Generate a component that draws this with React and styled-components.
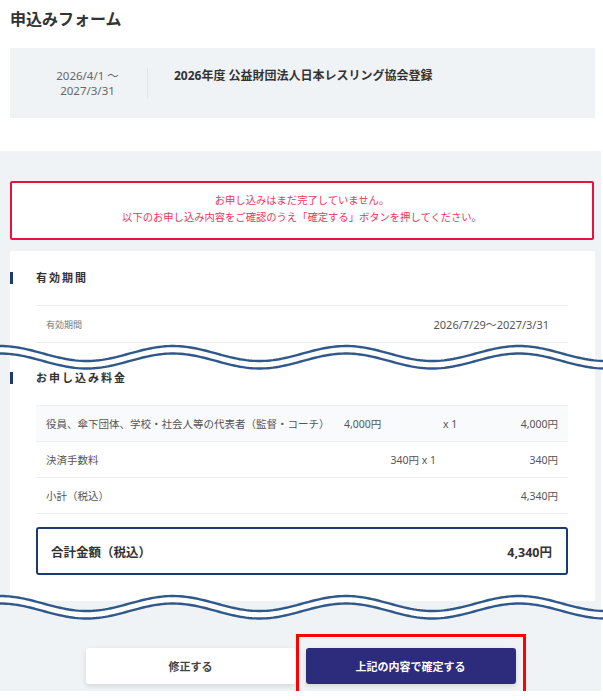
import React from "react";
import styled, { createGlobalStyle } from "styled-components";

const GlobalStyle = createGlobalStyle`
  body {
    margin: 0;
    background: #fff;
    font-family: "Noto Sans", "Noto Sans CJK JP", sans-serif;
    color: #555;
  }
`;

const wavePoints = (c, width = 603, period = 173, amp = 7.5) => {
  const pts = [];
  for (let x = 0; x <= width; x += 3) {
    pts.push([x, c - amp * Math.cos((2 * Math.PI * x) / period)]);
  }
  return pts;
};

const Wave = ({ offset }) => {
  const upper = wavePoints(9.5);
  const lower = wavePoints(17);
  const line = (pts) => "M" + pts.map((p) => p[0] + "," + p[1].toFixed(2)).join(" L");
  const band =
    line(upper) +
    " L" +
    lower
      .slice()
      .reverse()
      .map((p) => p[0] + "," + p[1].toFixed(2))
      .join(" L") +
    " Z";
  return (
    <Cut>
      <WaveSvg style={{ top: offset }} width="603" height="28" viewBox="0 0 603 28">
        <path d={band} fill="#fff" />
        <path d={line(upper)} fill="none" stroke="#30598b" strokeWidth="2.4" />
        <path d={line(lower)} fill="none" stroke="#30598b" strokeWidth="2.4" />
      </WaveSvg>
    </Cut>
  );
};

const App = () => {
  return (
    <Page>
      <GlobalStyle />
      <Header>
        <PageTitle>申込みフォーム</PageTitle>
        <InfoBox>
          <Dates>
            2026/4/1 ～
            <br />
            2027/3/31
          </Dates>
          <EventName>2026年度 公益財団法人日本レスリング協会登録</EventName>
        </InfoBox>
      </Header>

      <Section>
        <Notice>
          お申し込みはまだ完了していません。
          <br />
          以下のお申し込み内容をご確認のうえ「確定する」ボタンを押してください。
        </Notice>

        <Card first>
          <Heading>有効期間</Heading>
          <Table>
            <PeriodRow>
              <SmallLabel>有効期間</SmallLabel>
              <PeriodValue>2026/7/29～2027/3/31</PeriodValue>
            </PeriodRow>
          </Table>
        </Card>
        <Wave offset={-9} />
        <Card>
          <Heading>お申し込み料金</Heading>
          <Table>
            <FeeRow shaded>
              <Cell>役員、傘下団体、学校・社会人等の代表者（監督・コーチ）</Cell>
              <Cell>4,000円</Cell>
              <Cell>x 1</Cell>
              <Cell right>4,000円</Cell>
            </FeeRow>
            <SimpleRow>
              <Cell>決済手数料</Cell>
              <Cell right>340円 x 1</Cell>
              <Cell right>340円</Cell>
            </SimpleRow>
            <SimpleRow>
              <Cell>小計（税込）</Cell>
              <Cell />
              <Cell right>4,340円</Cell>
            </SimpleRow>
          </Table>
          <TotalBox>
            <span>合計金額（税込）</span>
            <span>4,340円</span>
          </TotalBox>
        </Card>
        <Wave offset={-7} />

        <Buttons>
          <Button>修正する</Button>
          <Highlight>
            <Button primary>上記の内容で確定する</Button>
          </Highlight>
        </Buttons>
      </Section>
    </Page>
  );
};

const Page = styled.div`
  width: 603px;
  padding-top: 9px;
`;

const Header = styled.div`
  padding: 0 8px 0 10px;
`;

const PageTitle = styled.h1`
  margin: 0;
  font-size: 16px;
  line-height: 20px;
  font-weight: 700;
  color: #333;
`;

const InfoBox = styled.div`
  margin-top: 19px;
  width: 585px;
  box-sizing: border-box;
  height: 70px;
  background: #eff3f6;
  display: flex;
  align-items: flex-start;
  padding: 20px 18px;
`;

const Dates = styled.div`
  width: 119px;
  text-align: center;
  font-size: 11.5px;
  line-height: 15px;
  color: #666;
  border-right: 1px solid #dfe4e8;
`;

const EventName = styled.div`
  padding-left: 26px;
  font-size: 12px;
  line-height: 16px;
  font-weight: 700;
  color: #333;
`;

const Section = styled.div`
  margin-top: 33px;
  width: 601px;
  box-sizing: border-box;
  background: #eff3f6;
  padding: 30px 6px 7px 10px;
`;

const Notice = styled.div`
  width: 584px;
  box-sizing: border-box;
  border: 2px solid #e8113f;
  border-radius: 2px;
  background: #fff;
  text-align: center;
  color: #ec3560;
  font-size: 10.3px;
  line-height: 17px;
  padding: 9px 0 12px;
`;

const Card = styled.div`
  margin-top: ${(p) => (p.first ? "11px" : "0")};
  width: 585px;
  box-sizing: border-box;
  background: #fff;
  padding: ${(p) => (p.first ? "20px 27px 10px 26px" : "18px 27px 26px 26px")};
`;

const Heading = styled.h2`
  position: relative;
  margin: 0;
  font-size: 11px;
  line-height: 14px;
  font-weight: 700;
  letter-spacing: 2px;
  color: #333;
  &::before {
    content: "";
    position: absolute;
    left: -26px;
    top: 1px;
    width: 3px;
    height: 12px;
    background: #1f3a6e;
  }
`;

const Table = styled.div`
  margin-top: 20px;
  border-top: 1px solid #edf0f3;
`;

const PeriodRow = styled.div`
  height: 36px;
  border-bottom: 1px solid #edf0f3;
  display: flex;
  align-items: center;
  justify-content: space-between;
  padding: 0 19px 0 10px;
`;

const SmallLabel = styled.span`
  font-size: 9px;
  color: #777;
`;

const PeriodValue = styled.span`
  font-size: 11px;
  color: #555;
`;

const FeeRow = styled.div`
  height: 35px;
  border-bottom: 1px solid #edf0f3;
  background: ${(p) => (p.shaded ? "#f8fafc" : "#fff")};
  display: grid;
  grid-template-columns: 1fr 99px 60px 55px;
  align-items: center;
  padding: 0 10px;
`;

const SimpleRow = styled.div`
  height: 35px;
  border-bottom: 1px solid #edf0f3;
  display: grid;
  grid-template-columns: 1fr auto 122px;
  align-items: center;
  padding: 0 10px;
`;

const Cell = styled.span`
  font-size: 10.5px;
  color: #555;
  white-space: nowrap;
  text-align: ${(p) => (p.right ? "right" : "left")};
`;

const TotalBox = styled.div`
  margin-top: 13px;
  height: 48px;
  box-sizing: border-box;
  border: 2px solid #1d3a6c;
  border-radius: 3px;
  display: flex;
  align-items: center;
  justify-content: space-between;
  padding: 0 14px 0 13px;
  font-size: 12.5px;
  font-weight: 700;
  color: #333;
`;

const Cut = styled.div`
  position: relative;
  height: 0;
  z-index: 2;
`;

const WaveSvg = styled.svg`
  position: absolute;
  left: -10px;
  display: block;
`;

const Buttons = styled.div`
  margin-top: 47px;
  display: flex;
  justify-content: center;
  gap: 10px;
  padding-right: 4px;
`;

const Button = styled.button`
  width: 210px;
  height: 36px;
  border: none;
  border-radius: 3px;
  font-family: inherit;
  font-size: 11px;
  font-weight: 700;
  background: ${(p) => (p.primary ? "#2d2b7b" : "#fff")};
  color: ${(p) => (p.primary ? "#fff" : "#444")};
  box-shadow: 0 2px 5px rgba(0, 0, 0, 0.12);
  cursor: pointer;
`;

const Highlight = styled.div`
  position: relative;
  &::after {
    content: "";
    position: absolute;
    top: -14px;
    bottom: -14px;
    left: -10px;
    right: -10px;
    border: 3px solid #ff0000;
    pointer-events: none;
  }
`;

export default App;
